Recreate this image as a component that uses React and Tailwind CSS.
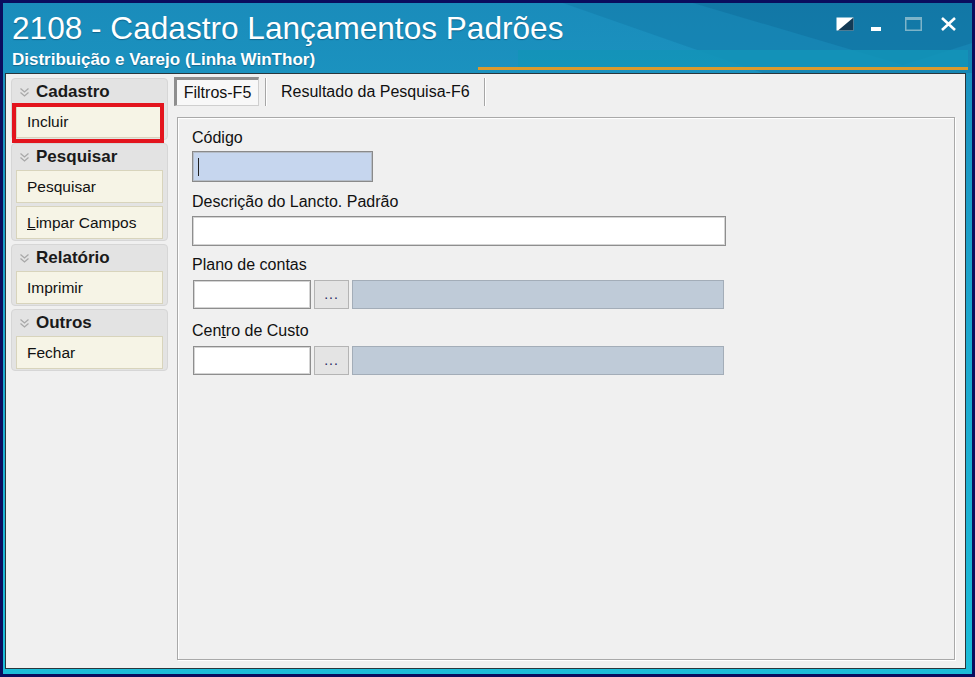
import React from 'react';

const ui = { fontFamily: '"Liberation Sans", Arial, sans-serif' };

function Chevron() {
  return (
    <svg width="11" height="11" viewBox="0 0 11 11" className="shrink-0">
      <path d="M1.5 1.5 L5.5 5 L9.5 1.5 M1.5 5.5 L5.5 9 L9.5 5.5" fill="none" stroke="#a8a8a8" strokeWidth="1.3" />
    </svg>
  );
}

function Group({ title, items }) {
  return (
    <div className="rounded-[4px] bg-[#e3e3e3] border border-[#d6d6d6] px-[4px] pb-[1px]">
      <div className="h-[26px] flex items-center gap-[6px] pl-[3px]">
        <Chevron />
        <span className="font-bold text-[17px] text-[#1a1a1a]">{title}</span>
      </div>
      <div className="flex flex-col gap-[3px]">
        {items.map((it) => (
          <div
            key={it.label}
            className="relative h-[33px] flex items-center px-[10px] bg-[#f6f4e6] border border-[#d8d4bc] text-[15.5px] text-[#111]"
          >
            {it.u ? (
              <span>
                <span className="underline">{it.label[0]}</span>
                {it.label.slice(1)}
              </span>
            ) : (
              it.label
            )}
            {it.mark && (
              <div className="absolute -left-[5px] -top-[3px] -right-[2px] -bottom-[6px] border-[4px] border-[#e3141d]" />
            )}
          </div>
        ))}
      </div>
    </div>
  );
}

function Label({ children, className = '' }) {
  return <div className={`h-[20px] leading-[20px] text-[16px] text-[#111] ${className}`}>{children}</div>;
}

function LookupRow() {
  return (
    <div className="flex items-stretch h-[29px] pl-[1px]">
      <div className="w-[118px] bg-white border border-[#8e8e8e] shadow-[inset_0_0_0_1px_#d4d4d4]" />
      <div className="w-[35px] ml-[3px] bg-[#e4e4e4] border border-[#b4b4b4] flex items-end justify-center pb-[7px]">
        <span className="text-[14px] leading-none text-[#26265e] tracking-[1px]">...</span>
      </div>
      <div className="w-[372px] ml-[3px] bg-[#bfcbd8] border border-[#a3adb8]" />
    </div>
  );
}

export default function App() {
  return (
    <div className="w-[975px] h-[677px] bg-[#0a0d5e] p-[3px]" style={ui}>
      <div className="relative h-full flex flex-col bg-gradient-to-b from-[#1a8cbb] via-[#1ea8ce] to-[#1cbdd8] overflow-hidden">
        <svg className="absolute inset-0 pointer-events-none" width="969" height="671" viewBox="0 0 969 671">
          <polygon points="560,0 969,0 969,70 760,70" fill="#0d6c9c" opacity="0.3" />
          <polygon points="690,0 969,0 969,40 900,62" fill="#0c5f8c" opacity="0.28" />
          <rect x="515" y="47" width="450" height="18" fill="#1394b9" opacity="0.85" />
          <rect x="475" y="64" width="490" height="3" fill="#d99a2e" />
        </svg>

        {/* title bar */}
        <div className="relative h-[70px] shrink-0 pl-[9px] pt-[8px] text-white">
          <div className="text-[31.6px] leading-[34px] [text-shadow:0_1px_1px_rgba(0,40,70,0.4)]">
            2108 - Cadastro Lançamentos Padrões
          </div>
          <div className="text-[17px] font-bold leading-[20px] mt-[5px] [text-shadow:0_1px_1px_rgba(0,40,70,0.4)]">
            Distribuição e Varejo (Linha WinThor)
          </div>
          <div className="absolute right-[15px] top-[14px] flex items-center">
            <svg width="18" height="14" viewBox="0 0 18 14">
              <rect x="0.5" y="0.5" width="17" height="13" fill="#ffffff" />
              <polygon points="17.5,0.5 17.5,13.5 2,13.5" fill="#123a55" />
            </svg>
            <svg width="10" height="14" viewBox="0 0 10 14" className="ml-[17px]">
              <rect x="0" y="10" width="10" height="4" fill="#ffffff" />
            </svg>
            <svg width="17" height="14" viewBox="0 0 17 14" className="ml-[24px]">
              <rect x="0.75" y="0.75" width="15.5" height="12.5" fill="none" stroke="#7db4c9" strokeWidth="1.5" />
              <rect x="0" y="0" width="17" height="3" fill="#7db4c9" />
            </svg>
            <svg width="17" height="14" viewBox="0 0 17 14" className="ml-[18px]">
              <path d="M2 1 L15 13 M15 1 L2 13" stroke="#ffffff" strokeWidth="2.6" />
            </svg>
          </div>
        </div>

        {/* content */}
        <div className="relative flex-1 ml-[2px] mr-[6px] mb-[5px] bg-[#f0f0f0] border border-[#29363c] flex">
          <div className="w-[162px] shrink-0 pl-[5px] pt-[4px] flex flex-col gap-[3px]">
            <Group title="Cadastro" items={[{ label: 'Incluir', mark: true }]} />
            <Group title="Pesquisar" items={[{ label: 'Pesquisar' }, { label: 'Limpar Campos', u: true }]} />
            <Group title="Relatório" items={[{ label: 'Imprimir' }]} />
            <Group title="Outros" items={[{ label: 'Fechar' }]} />
          </div>

          <div className="flex-1 flex flex-col pl-[6px] pr-[10px] pb-[8px]">
            {/* tabs */}
            <div className="flex items-stretch h-[29px] mt-[3px]">
              <div className="w-[85px] flex items-center justify-center bg-[#f8f8f8] border-t-[3px] border-l-[3px] border-r border-b border-t-[#8e8e8e] border-l-[#8e8e8e] border-r-[#cfcfcf] border-b-[#cfcfcf] text-[16px] text-[#111]">
                Filtros-F5
              </div>
              <div className="w-[6px]" />
              <div className="w-[2px] mt-[1px] border-l border-r border-l-[#a6a6a6] border-r-white" />
              <div className="w-[217px] flex items-center pl-[14px] text-[16px] text-[#111]">
                Resultado da Pesquisa-F6
              </div>
              <div className="w-[2px] mt-[1px] border-l border-r border-l-[#a6a6a6] border-r-white" />
            </div>

            {/* panel */}
            <div className="flex-1 mt-[11px] ml-[3px] border border-[#a9a9a9] shadow-[inset_1px_1px_0_#ffffff,1px_1px_0_#ffffff] pl-[14px] pt-[10px]">
              <Label>Código</Label>
              <div className="relative mt-[3px] w-[181px] h-[31px] bg-[#c6d6ee] border border-[#8a8a8a] shadow-[inset_0_0_0_1px_#b5bdc8]">
                <div className="absolute left-[5px] top-[6px] w-[1px] h-[18px] bg-[#222]" />
              </div>

              <Label className="mt-[10px]">Descrição do Lancto. Padrão</Label>
              <div className="mt-[4px] w-[534px] h-[30px] bg-white border border-[#8e8e8e] shadow-[inset_0_0_0_1px_#d4d4d4]" />

              <Label className="mt-[9px]">Plano de contas</Label>
              <div className="mt-[5px]">
                <LookupRow />
              </div>

              <Label className="mt-[12px]">
                Cen<span className="underline">t</span>ro de Custo
              </Label>
              <div className="mt-[5px]">
                <LookupRow />
              </div>
            </div>
          </div>
        </div>
      </div>
    </div>
  );
}
